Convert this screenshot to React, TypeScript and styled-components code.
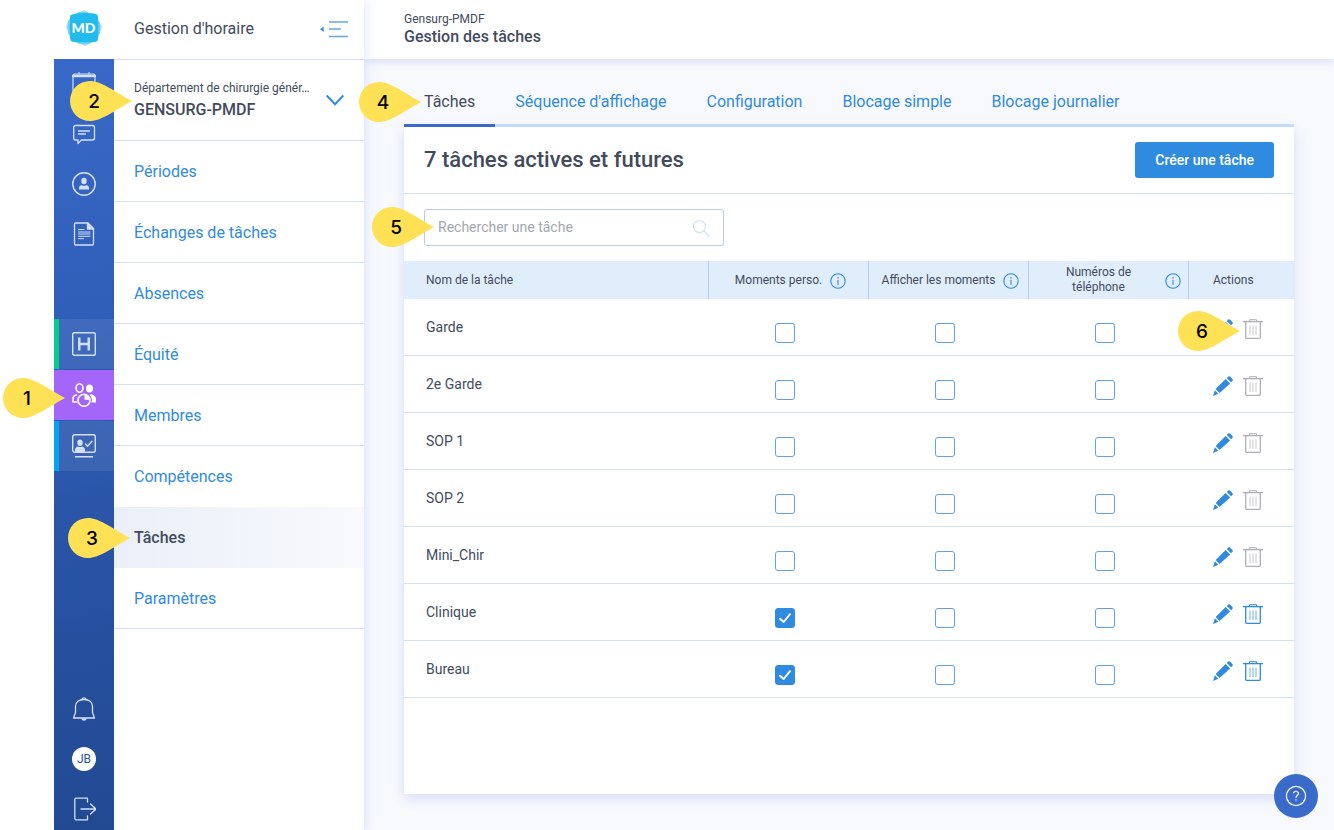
import React from 'react';
import styled, { createGlobalStyle, css } from 'styled-components';

const color = {
  text: '#424b5e',
  link: '#2f8be0',
  line: '#d6e0f4',
  navy: '#3a6bcb',
};

const GlobalStyle = createGlobalStyle`
  *, *::before, *::after { box-sizing: border-box; }
  body {
    margin: 0;
    background: #fff;
    color: ${color.text};
    font-family: Roboto, "Liberation Sans", sans-serif;
    font-size: 16px;
    line-height: 20px;
  }
  h1, h2, p, ul { margin: 0; padding: 0; }
  ul { list-style: none; }
  a { color: inherit; text-decoration: none; }
  button { font: inherit; color: inherit; border: 0; padding: 0; background: none; cursor: pointer; }
  svg { display: block; flex: none; }
`;

const Shell = styled.div`
  display: flex;
  min-height: 100vh;
  padding-left: 54px;
`;

/* ---------- icon rail ---------- */

const Rail = styled.nav`
  position: relative;
  z-index: 3;
  display: flex;
  flex-direction: column;
  flex: none;
  width: 60px;
`;

const LogoLink = styled.a`
  display: flex;
  align-items: center;
  justify-content: center;
  height: 59px;
  padding-bottom: 4px;
  background: #fff;
`;

const RailBody = styled.div`
  display: flex;
  flex-direction: column;
  flex: 1;
  background: linear-gradient(170deg, #3969c8 0%, #2f5eb8 35%, #264f9e 75%, #224a93 100%);
  color: #d5e0f5;
`;

const RailGroup = styled.ul`
  display: flex;
  flex-direction: column;
`;

const AppGroup = styled(RailGroup)`
  gap: 1px;
  margin-top: 60px;
`;

const FootGroup = styled(RailGroup)`
  gap: 8px;
  margin-top: auto;
`;

const RailItem = styled.li<{ $accent?: string; $active?: boolean; $short?: boolean }>`
  position: relative;
  height: ${p => (p.$short ? 42 : 50)}px;
  ${p => p.$accent && css`
    background: rgba(255, 255, 255, 0.08);
    box-shadow: inset 5px 0 0 ${p.$accent};
  `}
  ${p => p.$active && css`
    background: #a366f8;
    color: #fff;
  `}
`;

const RailLink = styled.a`
  display: flex;
  align-items: center;
  justify-content: center;
  height: 100%;
`;

const Avatar = styled.span`
  display: flex;
  align-items: center;
  justify-content: center;
  width: 24px;
  height: 24px;
  border-radius: 50%;
  background: #fff;
  color: #2a529f;
  font-size: 12px;
`;

/* ---------- section menu ---------- */

const Menu = styled.aside`
  position: relative;
  flex: none;
  width: 250px;
  background: #fff;
  box-shadow: 0 0 12px rgba(70, 110, 220, 0.2);
`;

const MenuHead = styled.div`
  display: flex;
  align-items: center;
  justify-content: space-between;
  height: 60px;
  padding: 0 16px 2px 20px;
  border-bottom: 1px solid ${color.line};
`;

const Department = styled.div`
  position: relative;
  border-bottom: 1px solid ${color.line};
`;

const DepartmentButton = styled.button`
  display: flex;
  align-items: center;
  justify-content: space-between;
  width: 100%;
  height: 80px;
  padding: 0 20px;
  text-align: left;
`;

const DepartmentText = styled.span`
  display: flex;
  flex-direction: column;
  padding-top: 3px;
`;

const Small = styled.span`
  font-size: 12px;
  line-height: 16px;
  white-space: nowrap;
`;

const Strong = styled.span`
  font-weight: 500;
  line-height: 28px;
`;

const MenuItem = styled.li<{ $active?: boolean; $noLine?: boolean }>`
  position: relative;
  border-bottom: 1px solid ${p => (p.$noLine ? 'transparent' : color.line)};
  color: ${p => (p.$active ? color.text : color.link)};
  font-weight: ${p => (p.$active ? 500 : 400)};
  ${p => p.$active && css`
    background: linear-gradient(90deg, #eaeff8, #f8f9fd) border-box;
  `}
`;

const MenuLink = styled.a`
  display: flex;
  align-items: center;
  height: 60px;
  padding: 2px 20px 0;
`;

/* ---------- main column ---------- */

const Main = styled.main`
  display: flex;
  flex-direction: column;
  flex: 1;
  min-width: 0;
  background: #f8f9fd;
`;

const PageHead = styled.header`
  display: flex;
  flex-direction: column;
  height: 59px;
  padding: 11px 40px 0;
  background: #fff;
  box-shadow: 0 2px 8px rgba(70, 110, 220, 0.2);
`;

const PageTitle = styled.h1`
  font-size: 16px;
  font-weight: 500;
  line-height: 20px;
`;

const Content = styled.div`
  display: flex;
  flex-direction: column;
  flex: 1;
  padding: 16px 40px 36px;
`;

const Tabs = styled.nav`
  position: relative;
  z-index: 1;
  display: flex;
  box-shadow: inset 0 -3px 0 #c3dcf6;
`;

const Tab = styled.a<{ $active?: boolean }>`
  position: relative;
  height: 52px;
  padding: 17px 20px 0;
  color: ${p => (p.$active ? color.text : color.link)};
  ${p => p.$active && css`box-shadow: inset 0 -3px 0 ${color.navy};`}
`;

const Card = styled.section`
  flex: 1;
  background: #fff;
  box-shadow: 0 4px 12px rgba(70, 110, 220, 0.2);
`;

const CardHead = styled.div`
  display: flex;
  align-items: center;
  justify-content: space-between;
  height: 67px;
  padding: 0 20px;
  border-bottom: 1px solid ${color.line};
`;

const CardTitle = styled.h2`
  font-size: 22px;
  font-weight: 500;
  line-height: 28px;
`;

const PrimaryButton = styled.button`
  height: 36px;
  padding: 0 20px;
  border-radius: 3px;
  background: ${color.link};
  color: #fff;
  font-size: 14px;
  font-weight: 500;
`;

const SearchRow = styled.div`
  display: flex;
  padding: 15px 20px;
`;

const SearchField = styled.label`
  position: relative;
  display: flex;
  align-items: center;
  gap: 12px;
  width: 300px;
  height: 37px;
  padding: 0 13px;
  border: 1px solid #bccbee;
  border-radius: 3px;
`;

const SearchInput = styled.input`
  flex: 1;
  min-width: 0;
  padding: 0 0 2px;
  border: 0;
  outline: 0;
  background: none;
  color: ${color.text};
  font: inherit;
  font-size: 14px;
  &::placeholder { color: #a3a7b0; opacity: 1; }
`;

/* ---------- table ---------- */

const Table = styled.table`
  width: 100%;
  border-collapse: separate;
  border-spacing: 0;
  table-layout: fixed;
`;

const HeadCell = styled.th<{ $width?: number }>`
  width: ${p => (p.$width ? `${p.$width}px` : 'auto')};
  height: 38px;
  padding: 0 7px 0 11px;
  background: #e0eefc;
  font-size: 12px;
  font-weight: 400;
  line-height: 15px;
  & + & { border-left: 1px solid #b9d0f2; }
  &:first-child { padding-left: 22px; text-align: left; }
  &:last-child { padding: 0 24px; text-align: left; }
`;

const HeadLabel = styled.span`
  display: flex;
  align-items: center;
  justify-content: center;
  gap: 8px;
`;

const InfoButton = styled.button`
  padding-top: 2px;
  color: ${color.link};
`;

const NameCell = styled.td`
  height: 57px;
  padding: 0 22px;
  border-bottom: 1px solid ${color.line};
  font-size: 14px;
`;

const CheckCell = styled.td`
  padding: 12px 6px 0 0;
  border-bottom: 1px solid ${color.line};
`;

const CheckBox = styled.input`
  appearance: none;
  display: block;
  width: 20px;
  height: 20px;
  margin: 0;
  border: 1px solid #5ba3e8;
  border-radius: 3px;
  background: #fff;
  &:checked { border-color: ${color.link}; background: ${color.link}; }
`;

const CheckWrap = styled.span`
  position: relative;
  display: block;
  width: 20px;
  margin: 0 auto;
`;

const CheckMark = styled.svg`
  position: absolute;
  inset: 0;
  pointer-events: none;
`;

const ActionCell = styled.td`
  padding: 3px 24px 0 25px;
  border-bottom: 1px solid ${color.line};
`;

const Actions = styled.div`
  position: relative;
  display: flex;
  gap: 10px;
`;

const IconButton = styled.button`
  color: ${color.link};
  &:disabled { color: #adb0b7; cursor: default; }
`;

const HelpButton = styled.button`
  position: fixed;
  right: 16px;
  bottom: 12px;
  z-index: 4;
  display: flex;
  align-items: center;
  justify-content: center;
  width: 44px;
  height: 44px;
  border-radius: 50%;
  background: ${color.navy};
  color: #fff;
`;

/* ---------- step markers ---------- */

const Marker = styled.span<{ $left: number; $top: number }>`
  position: absolute;
  left: ${p => p.$left}px;
  top: ${p => p.$top}px;
  z-index: 5;
  width: 62px;
  height: 40px;
  pointer-events: none;
`;

const MarkerNumber = styled.span`
  position: absolute;
  inset: 0 14px 0 0;
  color: #000;
  font-family: Inter, sans-serif;
  font-size: 19px;
  font-weight: 500;
  line-height: 41px;
  text-align: center;
`;

function Step({ n, left, top }: { n: number; left: number; top: number }) {
  return (
    <Marker $left={left} $top={top}>
      <svg width="62" height="40" viewBox="0 0 62 40" aria-hidden="true">
        <path d="M20 0C31 0 42 9 62 20C42 31 31 40 20 40A20 20 0 0 1 20 0Z" fill="#fee154" />
      </svg>
      <MarkerNumber>{n}</MarkerNumber>
    </Marker>
  );
}

/* ---------- icons ---------- */

function Line({ size = 24, width = 1.2, children }: { size?: number; width?: number; children: React.ReactNode }) {
  return (
    <svg width={size} height={size} viewBox={`0 0 ${size} ${size}`} fill="none" stroke="currentColor"
      strokeWidth={width} strokeLinejoin="round" strokeLinecap="round" aria-hidden="true">
      {children}
    </svg>
  );
}

const Logo = () => (
  <svg width="38" height="38" viewBox="0 0 38 38" aria-hidden="true">
    <path d="M8 6L13 4L19 1L24 4L31 5L33 11L37 18L34 26L31 33L25 34L20 37L13 34L6 32L5 26L1 18L5 12L5 6Z" fill="#9adff5" />
    <path d="M2.500 13L7 6L14 3L22 3L30 7L35 14L35 24L31 31L24 35L15 35L7 31L3 24Z" fill="#6fd3f3" />
    <path d="M7 5.500Q19 2.800 31 5Q33 5.500 33 8Q33.700 19 33 30Q33 32.500 30.500 32.700Q19 34 8 32.700Q5.500 32.500 5.200 30Q4.300 19 5.200 8Q5.300 6 7 5.500Z" fill="#22bbee" />
    <text x="18.500" y="24" textAnchor="middle" fill="#fff" fontFamily="Lato, sans-serif" fontWeight="900" fontSize="14">MD</text>
  </svg>
);

const CalendarIcon = () => (
  <Line><path d="M1 22V3.500Q1 2 2.500 2H21.500Q23 2 23 3.500V22Q23 23 22 23H2Q1 23 1 22Z" /><path d="M1 4H23" strokeWidth="2.500" /><path d="M7 .6V2M17 .6V2" /></Line>
);
const ChatIcon = () => (
  <Line width={1.3}><path d="M3.500 3.500H20.500Q22.500 3.500 22.500 5.500V16Q22.500 18 20.500 18H9.500L6 21.500V18H3.500Q1.700 18 1.700 16V5.500Q1.700 3.500 3.500 3.500Z" /><path d="M6.500 9H17.500M6.500 12H13.500" /></Line>
);
const PersonIcon = () => (
  <Line width={1.4}><circle cx="12" cy="12" r="11.200" /><ellipse cx="12" cy="9" rx="2.700" ry="3.200" fill="currentColor" stroke="none" /><path d="M7 17.500V16Q7 13.600 9.800 13.300Q12 14.300 14.200 13.300Q17 13.600 17 16V17.500Z" fill="currentColor" stroke="none" /></Line>
);
const DocumentIcon = () => (
  <Line width={1.3}><path d="M2.500 2Q2.500 1 3.500 1H16L21.500 6.500V22Q21.500 23 20.500 23H3.500Q2.500 23 2.500 22Z" /><path d="M15.500 1V7H21.500Z" fill="currentColor" /><path d="M6.500 7.500H12M6.500 10H18M6.500 12H18M6.500 14.300H18M6.500 16.700H11.500" strokeWidth="1" /></Line>
);
const HospitalIcon = () => (
  <Line width={1.4}><rect x=".7" y=".7" width="22.600" height="22.600" rx="1.500" /><path d="M7.300 5.500V18.500M16.700 5.500V18.500M7.300 12H16.700" strokeWidth="2.400" strokeLinecap="butt" /></Line>
);
const TeamIcon = () => (
  <Line width={1.6}>
    <ellipse cx="7.500" cy="5" rx="3.400" ry="4.200" />
    <ellipse cx="17.500" cy="5.500" rx="3.500" ry="4" fill="currentColor" stroke="none" />
    <path d="M4.500 19H1V16Q1 12.500 4.500 12" />
    <path d="M19 11Q24 12.500 24 16V19.500H19.500Q20.800 15.500 17.800 12Z" fill="currentColor" stroke="none" />
    <circle cx="12" cy="17.300" r="6" />
    <path d="M12.500 16.700V11.500Q17 12 17.600 16.700Z" fill="currentColor" stroke="none" />
  </Line>
);
const ScreenIcon = () => (
  <Line width={1.4}><rect x=".7" y=".7" width="22.600" height="17.600" rx="2" /><ellipse cx="8" cy="8.700" rx="2.700" ry="3.200" fill="currentColor" stroke="none" /><path d="M3 18V16Q3 13.200 6 12.500Q8 13.500 10 12.500Q13 13.200 13 16V18Z" fill="currentColor" stroke="none" /><path d="M13.500 10L15.500 12.200L20 7.200M3.500 22.800H20.500" /></Line>
);
const BellIcon = () => (
  <Line width={1.3}><path d="M1.500 21H22.500L20.500 15.500V9.500C20.500 5 17 2.500 12 2.500S3.500 5 3.500 9.500V15.500Z" /><path d="M10 2Q10.500 .8 12 .8T14 2" /><path d="M9 21.500Q10 23.700 12 23.700T15 21.500Z" fill="currentColor" stroke="none" /></Line>
);
const LogoutIcon = () => (
  <Line width={1.3}><path d="M15.500 5V1.200H4Q2.800 1.200 2.800 2.500V21.500Q2.800 22.800 4 22.800H15.500V19M9 12H24M18.500 7L24 12L18.500 17" /></Line>
);
const CollapseIcon = () => (
  <svg width="28" height="18" viewBox="0 0 28 18" fill="none" stroke="#5fa7e9" strokeWidth="1.600" aria-hidden="true">
    <path d="M3.600 6.500V12L0 9.250Z" fill="#2f8be0" stroke="none" /><path d="M9 2H28M9 9H21M9 16.500H28" />
  </svg>
);
const ChevronIcon = () => (
  <svg width="18" height="12" viewBox="0 0 18 12" fill="none" stroke="#2f8be0" strokeWidth="2" aria-hidden="true">
    <path d="M.7 1.500L9 10.300L17.300 1.500" />
  </svg>
);
const SearchIcon = () => (
  <svg width="18" height="18" viewBox="0 0 18 18" fill="none" stroke="#d3e0f7" strokeWidth="1.200" aria-hidden="true">
    <circle cx="7.500" cy="7.500" r="6" /><path d="M12 12L17.500 17.500" />
  </svg>
);
const InfoIcon = () => (
  <svg width="16" height="16" viewBox="0 0 16 16" fill="none" stroke="currentColor" aria-hidden="true">
    <circle cx="8" cy="8" r="7.200" strokeWidth="1.100" /><path d="M8 6.800V12M8 4V5.500" strokeWidth="1.100" />
  </svg>
);
const PencilIcon = () => (
  <svg width="20" height="20" viewBox="0 0 20 20" fill="currentColor" aria-hidden="true">
    <path d="M12.600 2.900L17.100 7.400L6.600 17L2.600 13Z" />
    <path d="M13.800 1.900L15.300 .5Q16.100 -.2 17 .6L19.400 3Q20.200 3.900 19.500 4.700L18.100 6.300Z" />
    <path d="M1.900 14.300L5.400 17.800L0 20Z" />
  </svg>
);
const TrashIcon = () => (
  <svg width="20" height="20" viewBox="0 0 20 20" fill="none" stroke="currentColor" aria-hidden="true">
    <path d="M0 2.600H20" strokeWidth="1.400" /><path d="M6.500 2.500V.7H13.500V2.500" />
    <path d="M2.700 3V18.500Q2.700 19.300 3.500 19.300H16.500Q17.300 19.300 17.300 18.500V3" strokeWidth="1.300" />
    <path d="M7 6.500V16M10 6.500V16M13 6.500V16" strokeWidth="1" opacity=".7" />
  </svg>
);

/* ---------- data ---------- */

const sections = ['Périodes', 'Échanges de tâches', 'Absences', 'Équité', 'Membres', 'Compétences', 'Tâches', 'Paramètres'];
const currentSection = sections.indexOf('Tâches');
const tabs = ['Tâches', "Séquence d'affichage", 'Configuration', 'Blocage simple', 'Blocage journalier'];
const options = ['Moments perso.', 'Afficher les moments', 'Numéros de téléphone'];
const tasks = [
  { name: 'Garde', personal: false, removable: false },
  { name: '2e Garde', personal: false, removable: false },
  { name: 'SOP 1', personal: false, removable: false },
  { name: 'SOP 2', personal: false, removable: false },
  { name: 'Mini_Chir', personal: false, removable: false },
  { name: 'Clinique', personal: true, removable: true },
  { name: 'Bureau', personal: true, removable: true },
];

function TaskCheck({ label, initial }: { label: string; initial: boolean }) {
  const [on, setOn] = React.useState(initial);
  return (
    <CheckWrap>
      <CheckBox type="checkbox" aria-label={label} checked={on} onChange={() => setOn(!on)} />
      {on && (
        <CheckMark width="20" height="20" viewBox="0 0 20 20" fill="none" stroke="#fff" strokeWidth="1.900" strokeLinecap="round" strokeLinejoin="round">
          <path d="M5 10.700L8.700 14L15 6.200" />
        </CheckMark>
      )}
    </CheckWrap>
  );
}

export default function App() {
  return (
    <Shell>
      <GlobalStyle />
      <Rail aria-label="Applications">
        <LogoLink href="#" aria-label="Accueil"><Logo /></LogoLink>
        <RailBody>
          <RailGroup>
            <RailItem><RailLink href="#" aria-label="Calendrier"><CalendarIcon /></RailLink></RailItem>
            <RailItem><RailLink href="#" aria-label="Messages"><ChatIcon /></RailLink></RailItem>
            <RailItem><RailLink href="#" aria-label="Profil"><PersonIcon /></RailLink></RailItem>
            <RailItem><RailLink href="#" aria-label="Documents"><DocumentIcon /></RailLink></RailItem>
          </RailGroup>
          <AppGroup>
            <RailItem $accent="#00cf8d"><RailLink href="#" aria-label="Hôpital"><HospitalIcon /></RailLink></RailItem>
            <RailItem $active>
              <RailLink href="#" aria-label="Horaire"><TeamIcon /></RailLink>
              <Step n={1} left={-51} top={8} />
            </RailItem>
            <RailItem $accent="#00a3f5"><RailLink href="#" aria-label="Présences"><ScreenIcon /></RailLink></RailItem>
          </AppGroup>
          <FootGroup>
            <RailItem $short><RailLink href="#" aria-label="Notifications"><BellIcon /></RailLink></RailItem>
            <RailItem $short><RailLink href="#"><Avatar>JB</Avatar></RailLink></RailItem>
            <RailItem $short><RailLink href="#" aria-label="Déconnexion"><LogoutIcon /></RailLink></RailItem>
          </FootGroup>
        </RailBody>
      </Rail>

      <Menu>
        <MenuHead>
          <span>Gestion d'horaire</span>
          <button aria-label="Réduire le menu"><CollapseIcon /></button>
        </MenuHead>
        <Department>
          <DepartmentButton>
            <DepartmentText>
              <Small>Département de chirurgie génér…</Small>
              <Strong>GENSURG-PMDF</Strong>
            </DepartmentText>
            <ChevronIcon />
          </DepartmentButton>
          <Step n={2} left={-44} top={21} />
        </Department>
        <ul>
          {sections.map((s, i) => (
            <MenuItem key={s} $active={i === currentSection} $noLine={i === currentSection || i === currentSection - 1}>
              <MenuLink href="#">{s}</MenuLink>
              {i === currentSection && <Step n={3} left={-46} top={11} />}
            </MenuItem>
          ))}
        </ul>
      </Menu>

      <Main>
        <PageHead>
          <Small>Gensurg-PMDF</Small>
          <PageTitle>Gestion des tâches</PageTitle>
        </PageHead>
        <Content>
          <Tabs>
            {tabs.map((t, i) => (
              <Tab key={t} href="#" $active={i === 0}>
                {t}
                {i === 0 && <Step n={4} left={-45} top={7} />}
              </Tab>
            ))}
          </Tabs>
          <Card>
            <CardHead>
              <CardTitle>7 tâches actives et futures</CardTitle>
              <PrimaryButton>Créer une tâche</PrimaryButton>
            </CardHead>
            <SearchRow>
              <SearchField>
                <SearchInput type="text" placeholder="Rechercher une tâche" aria-label="Rechercher une tâche" />
                <SearchIcon />
                <Step n={5} left={-53} top={-3} />
              </SearchField>
            </SearchRow>
            <Table>
              <thead>
                <tr>
                  <HeadCell>Nom de la tâche</HeadCell>
                  {options.map(o => (
                    <HeadCell key={o} $width={160}>
                      <HeadLabel>
                        {o}
                        <InfoButton aria-label={`À propos : ${o}`}><InfoIcon /></InfoButton>
                      </HeadLabel>
                    </HeadCell>
                  ))}
                  <HeadCell $width={106}>Actions</HeadCell>
                </tr>
              </thead>
              <tbody>
                {tasks.map((task, i) => (
                  <tr key={task.name}>
                    <NameCell>{task.name}</NameCell>
                    {options.map((o, j) => (
                      <CheckCell key={o}>
                        <TaskCheck label={`${o} – ${task.name}`} initial={j === 0 && task.personal} />
                      </CheckCell>
                    ))}
                    <ActionCell>
                      <Actions>
                        <IconButton aria-label={`Modifier ${task.name}`}><PencilIcon /></IconButton>
                        <IconButton aria-label={`Supprimer ${task.name}`} disabled={!task.removable}><TrashIcon /></IconButton>
                        {i === 0 && <Step n={6} left={-35} top={-8} />}
                      </Actions>
                    </ActionCell>
                  </tr>
                ))}
              </tbody>
            </Table>
          </Card>
        </Content>
      </Main>

      <HelpButton aria-label="Aide">
        <svg width="22" height="22" viewBox="0 0 22 22" fill="none" stroke="currentColor" strokeWidth="1.200" aria-hidden="true">
          <circle cx="11" cy="11" r="9.600" />
          <path d="M8.500 8.300Q8.700 6.500 11 6.500T13.500 8.500C13.500 10.300 11 10.300 11 12.800M11 14.300V15.600" />
        </svg>
      </HelpButton>
    </Shell>
  );
}
